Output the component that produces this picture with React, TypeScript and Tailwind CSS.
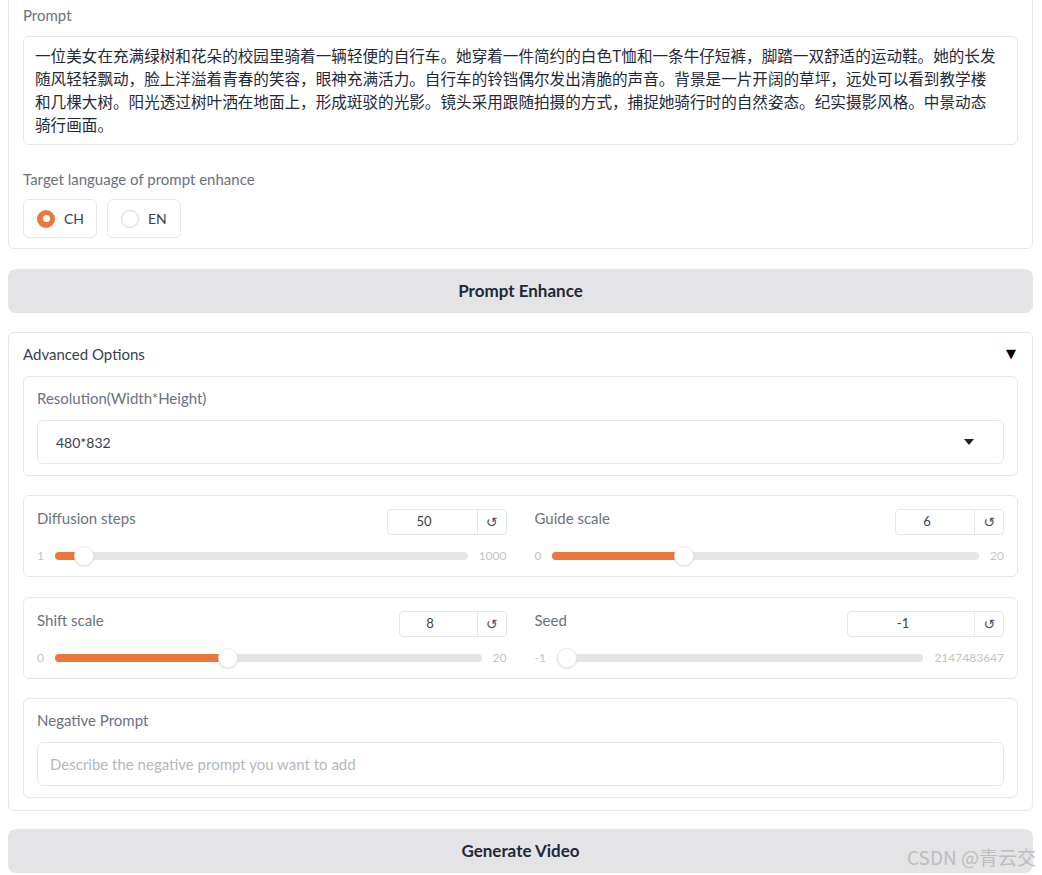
import React from "react";

const CJK = "font-['Noto_Sans_CJK_SC','Noto_Sans',sans-serif]";

function NumberBox({ value, w }: { value: string; w: number }) {
  return (
    <div className="flex h-[26px] border border-[#e5e7eb] rounded-[4px] bg-white">
      <div
        className="flex items-center justify-center pr-[16px] text-[13px] text-[#374151] border-r border-[#e5e7eb]"
        style={{ width: w }}
      >
        {value}
      </div>
      <div className="w-[28px] flex items-center justify-center text-[14px] text-[#4b5563] font-['DejaVu_Sans',sans-serif]">
        ↺
      </div>
    </div>
  );
}

function SliderCol({
  label,
  value,
  w,
  min,
  max,
  frac,
}: {
  label: string;
  value: string;
  w: number;
  min: string;
  max: string;
  frac: number;
}) {
  return (
    <div className="flex flex-col">
      <div className="flex justify-between items-start h-[25px]">
        <div className="text-[15px] leading-[20px] text-[#6b7280] mt-[-1px]">{label}</div>
        <NumberBox value={value} w={w} />
      </div>
      <div className="mt-[12px] h-[20px] flex items-center gap-[11px]">
        <div className="text-[12px] text-[#c4c4c4]">{min}</div>
        <div className="relative flex-1 h-[8px] rounded-full bg-[#e5e5e5]">
          <div
            className="absolute left-0 top-0 h-[8px] rounded-full bg-[#e8793a]"
            style={{ width: `calc(10px + ${frac} * (100% - 20px))` }}
          />
          <div
            className="absolute top-[-6px] w-[20px] h-[20px] rounded-full bg-white border border-[#ececec] shadow-[0_1px_2px_rgba(0,0,0,0.12)]"
            style={{ left: `calc(${frac} * (100% - 20px))` }}
          />
        </div>
        <div className="text-[12px] text-[#c4c4c4]">{max}</div>
      </div>
    </div>
  );
}

export default function App() {
  return (
    <div className="relative w-[1042px] h-[875px] overflow-hidden bg-white font-['Lato','Liberation_Sans',sans-serif]">
      <div className="ml-[8px] w-[1025px] flex flex-col">
        {/* Prompt panel */}
        <div className="mt-[-10px] border border-[#e5e7eb] rounded-[6px] px-[14px] pt-[14px] pb-[10px] bg-white">
          <div className="text-[15px] leading-[20px] text-[#6b7280]">Prompt</div>
          <div
            className={`mt-[11px] h-[109px] border border-[#e5e7eb] rounded-[6px] px-[11px] pt-[7px] text-[15.6px] leading-[23px] text-[#1f2937] whitespace-nowrap ${CJK}`}
          >
            一位美女在充满绿树和花朵的校园里骑着一辆轻便的自行车。她穿着一件简约的白色T恤和一条牛仔短裤，脚踏一双舒适的运动鞋。她的长发
            <br />
            随风轻轻飘动，脸上洋溢着青春的笑容，眼神充满活力。自行车的铃铛偶尔发出清脆的声音。背景是一片开阔的草坪，远处可以看到教学楼
            <br />
            和几棵大树。阳光透过树叶洒在地面上，形成斑驳的光影。镜头采用跟随拍摄的方式，捕捉她骑行时的自然姿态。纪实摄影风格。中景动态
            <br />
            骑行画面。
          </div>
          <div className="mt-[24px] text-[15px] leading-[20px] text-[#6b7280]">
            Target language of prompt enhance
          </div>
          <div className="mt-[10px] flex gap-[10px]">
            <div className="w-[74px] h-[39px] border border-[#e5e7eb] rounded-[6px] flex items-center pl-[13px] gap-[9px]">
              <div className="w-[18px] h-[18px] rounded-full bg-[#e8793a] flex items-center justify-center">
                <div className="w-[7px] h-[7px] rounded-full bg-white" />
              </div>
              <span className="text-[14px] text-[#374151]">CH</span>
            </div>
            <div className="w-[74px] h-[39px] border border-[#e5e7eb] rounded-[6px] flex items-center pl-[13px] gap-[9px]">
              <div className="w-[18px] h-[18px] rounded-full border border-[#d4d4d8] bg-white" />
              <span className="text-[14px] text-[#374151]">EN</span>
            </div>
          </div>
        </div>

        {/* Prompt Enhance */}
        <div className="mt-[20px] h-[44px] rounded-[8px] bg-[#e4e4e7] flex items-center justify-center text-[17px] font-bold text-[#1f2937]">
          Prompt Enhance
        </div>

        {/* Advanced Options */}
        <div className="mt-[19px] border border-[#e5e7eb] rounded-[6px] px-[14px] pt-[11px] pb-[12px]">
          <div className="flex justify-between items-center h-[20px]">
            <span className="text-[15px] text-[#374151]">Advanced Options</span>
            <span className="text-[13px] text-black mr-[2px] font-['DejaVu_Sans',sans-serif]">▼</span>
          </div>

          <div className="mt-[12px] border border-[#e5e7eb] rounded-[6px] px-[13px] pt-[11px] pb-[11px]">
            <div className="text-[15px] leading-[20px] text-[#6b7280]">Resolution(Width*Height)</div>
            <div className="mt-[12px] h-[44px] border border-[#e5e7eb] rounded-[6px] pl-[18px] pr-[29px] flex items-center justify-between">
              <span className="text-[14px] text-[#374151]">480*832</span>
              <svg width="10" height="6" viewBox="0 0 10 6">
                <path d="M0 0 L10 0 L5 6 Z" fill="#222" />
              </svg>
            </div>
          </div>

          <div className="mt-[19px] border border-[#e5e7eb] rounded-[6px] px-[13px] pt-[13px] pb-[10px] grid grid-cols-2 gap-x-[28px]">
            <SliderCol label="Diffusion steps" value="50" w={90} min="1" max="1000" frac={49 / 999} />
            <SliderCol label="Guide scale" value="6" w={79} min="0" max="20" frac={0.3} />
          </div>

          <div className="mt-[20px] border border-[#e5e7eb] rounded-[6px] px-[13px] pt-[13px] pb-[10px] grid grid-cols-2 gap-x-[28px]">
            <SliderCol label="Shift scale" value="8" w={78} min="0" max="20" frac={0.4} />
            <SliderCol label="Seed" value="-1" w={127} min="-1" max="2147483647" frac={0} />
          </div>

          <div className="mt-[19px] border border-[#e5e7eb] rounded-[6px] px-[13px] pt-[11px] pb-[11px]">
            <div className="text-[15px] leading-[20px] text-[#6b7280]">Negative Prompt</div>
            <div className="mt-[12px] h-[44px] border border-[#e5e7eb] rounded-[6px] pl-[12px] flex items-center">
              <span className="text-[15px] text-[#b4b8bf]">Describe the negative prompt you want to add</span>
            </div>
          </div>
        </div>

        {/* Generate Video */}
        <div className="mt-[18px] h-[44px] rounded-[8px] bg-[#e4e4e7] flex items-center justify-center text-[17px] font-bold text-[#1f2937]">
          Generate Video
        </div>
      </div>

      <div className={`absolute left-[907px] top-[844px] text-[19px] leading-[26px] text-[#bdbdbd] whitespace-nowrap ${CJK}`}>
        CSDN @青云交
      </div>
    </div>
  );
}
